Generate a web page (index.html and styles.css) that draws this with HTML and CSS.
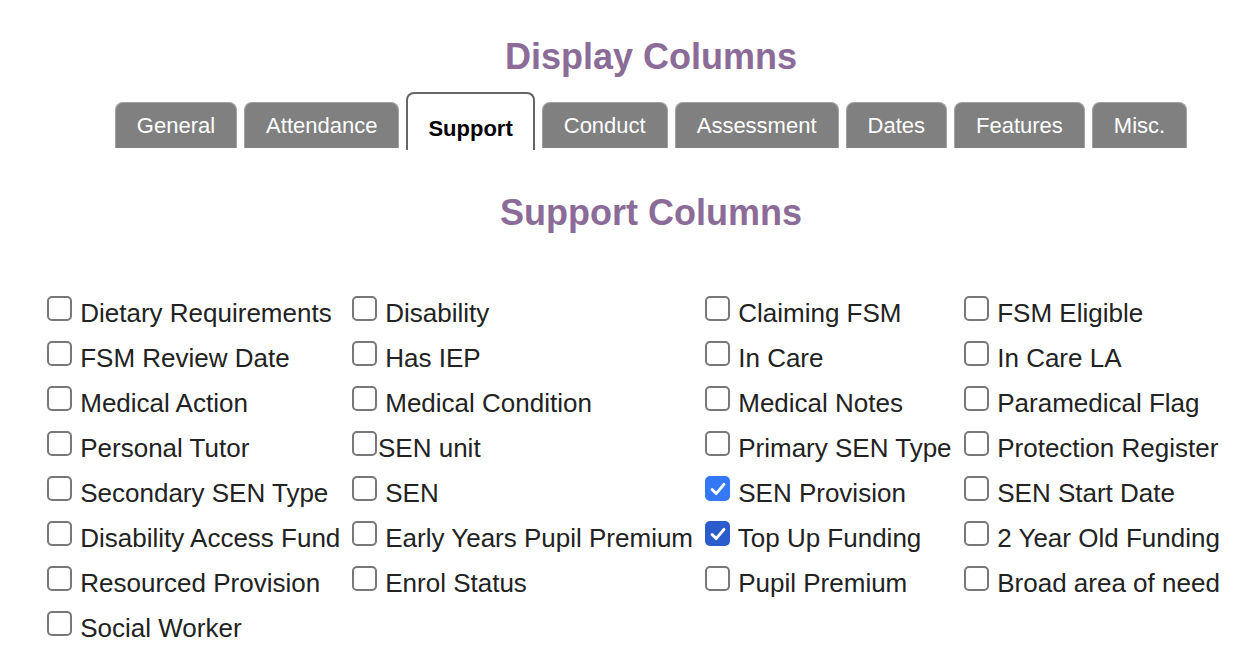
FILE: index.html
```html
<!DOCTYPE html>
<html>
<head>
<meta charset="utf-8">
<link rel="stylesheet" href="styles.css">
</head>
<body>
<div class="head">
  <h1 class="title">Display Columns</h1>
  <div class="tabs">
    <div class="tab">General</div>
    <div class="tab">Attendance</div>
    <div class="tab active">Support</div>
    <div class="tab">Conduct</div>
    <div class="tab">Assessment</div>
    <div class="tab">Dates</div>
    <div class="tab">Features</div>
    <div class="tab">Misc.</div>
  </div>
  <h2 class="title sub">Support Columns</h2>
</div>
<div class="grid">
  <label class="opt"><span class="box"></span> Dietary Requirements</label>
  <label class="opt"><span class="box"></span> Disability</label>
  <label class="opt"><span class="box"></span> Claiming FSM</label>
  <label class="opt"><span class="box"></span> FSM Eligible</label>

  <label class="opt"><span class="box"></span> FSM Review Date</label>
  <label class="opt"><span class="box"></span> Has IEP</label>
  <label class="opt"><span class="box"></span> In Care</label>
  <label class="opt"><span class="box"></span> In Care LA</label>

  <label class="opt"><span class="box"></span> Medical Action</label>
  <label class="opt"><span class="box"></span> Medical Condition</label>
  <label class="opt"><span class="box"></span> Medical Notes</label>
  <label class="opt"><span class="box"></span> Paramedical Flag</label>

  <label class="opt"><span class="box"></span> Personal Tutor</label>
  <label class="opt"><span class="box"></span>SEN unit</label>
  <label class="opt"><span class="box"></span> Primary SEN Type</label>
  <label class="opt"><span class="box"></span> Protection Register</label>

  <label class="opt"><span class="box"></span> Secondary SEN Type</label>
  <label class="opt"><span class="box"></span> SEN</label>
  <label class="opt"><span class="box checked"><svg viewBox="0 0 24 24"><polyline points="5.5,12.5 10,17 18.5,7" /></svg></span> SEN Provision</label>
  <label class="opt"><span class="box"></span> SEN Start Date</label>

  <label class="opt"><span class="box"></span> Disability Access Fund</label>
  <label class="opt"><span class="box"></span> Early Years Pupil Premium</label>
  <label class="opt"><span class="box checked dark"><svg viewBox="0 0 24 24"><polyline points="5.5,12.5 10,17 18.5,7" /></svg></span> Top Up Funding</label>
  <label class="opt"><span class="box"></span> 2 Year Old Funding</label>

  <label class="opt"><span class="box"></span> Resourced Provision</label>
  <label class="opt"><span class="box"></span> Enrol Status</label>
  <label class="opt"><span class="box"></span> Pupil Premium</label>
  <label class="opt"><span class="box"></span> Broad area of need</label>

  <label class="opt"><span class="box"></span> Social Worker</label>
</div>
</body>
</html>
```

FILE: styles.css
```css
html, body {
  margin: 0;
  padding: 0;
  background: #ffffff;
  font-family: "Liberation Sans", Arial, sans-serif;
}

.head {
  padding-left: 46px;
  padding-top: 37px;
}

.title {
  margin: 0;
  text-align: center;
  font-size: 36px;
  line-height: 40px;
  font-weight: bold;
  color: #8b6b97;
}

.sub {
  margin-top: 43px;
}

.tabs {
  display: flex;
  justify-content: center;
  align-items: flex-end;
  gap: 7px;
  margin-top: 15px;
}

.tab {
  font-size: 22px;
  line-height: 25px;
  color: #ffffff;
  background: #808080;
  border: 1px solid #a3a3a3;
  border-bottom: none;
  border-radius: 8px 8px 0 0;
  padding: 10px 21px 10px;
  margin-bottom: 2px;
}

.tab.active {
  background: #ffffff;
  color: #000000;
  font-weight: bold;
  border: 2px solid #666666;
  border-bottom: none;
  padding: 22px 20px 9px;
  margin-bottom: 0;
}

.grid {
  display: grid;
  grid-template-columns: 305px 353px 259px auto;
  padding-left: 47px;
  margin-top: 58px;
}

.opt {
  display: flex;
  align-items: flex-start;
  height: 45px;
  font-size: 26px;
  line-height: 45px;
  color: #222222;
  white-space: pre;
}

.box {
  box-sizing: border-box;
  flex: none;
  width: 25px;
  height: 25px;
  margin-top: 5px;
  margin-right: 1px;
  border: 2px solid #787878;
  border-radius: 5px;
  background: #ffffff;
  display: flex;
  align-items: center;
  justify-content: center;
}

.box.checked {
  border: none;
  background: #3478f6;
}

.box.checked.dark {
  background: #2a5dcb;
}

.box svg {
  width: 22px;
  height: 22px;
}

.box polyline {
  fill: none;
  stroke: #ffffff;
  stroke-width: 3.2;
  stroke-linecap: round;
  stroke-linejoin: round;
}
```
